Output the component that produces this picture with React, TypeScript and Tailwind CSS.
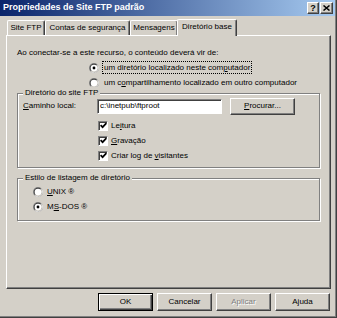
import React from 'react';

const raised =
  'border border-t-white border-l-white border-r-[#404040] border-b-[#404040] shadow-[inset_-1px_-1px_0_#808080]';
const sunken =
  'border border-t-[#808080] border-l-[#808080] border-r-white border-b-white shadow-[inset_1px_1px_0_#404040]';
const etched = 'border border-[#808080] shadow-[inset_1px_1px_0_#fff,1px_1px_0_#fff]';

function Radio({ checked }: { checked?: boolean }) {
  return (
    <svg width="10" height="10" viewBox="0 0 12 12" className="shrink-0">
      <circle cx="6" cy="6" r="6" fill="#808080" />
      <path d="M10.24 1.76A6 6 0 0 1 1.76 10.24Z" fill="#fff" />
      <circle cx="6" cy="6" r="5" fill="#404040" />
      <path d="M9.54 2.46A5 5 0 0 1 2.46 9.54Z" fill="#d4d0c8" />
      <circle cx="6" cy="6" r="4" fill="#fff" />
      {checked && <circle cx="6" cy="6" r="1.7" fill="#000" />}
    </svg>
  );
}

function Check() {
  return (
    <span className={`flex h-[10px] w-[10px] shrink-0 items-center justify-center bg-white ${sunken}`}>
      <svg width="7" height="7" viewBox="0 0 7 7">
        <path d="M0.6 3.2 L2.6 5.2 L6.4 1.2" stroke="#000" strokeWidth="1.7" fill="none" />
      </svg>
    </span>
  );
}

function Tab({ label, w }: { label: string; w: string }) {
  return (
    <div
      className={`${w} flex h-[15px] items-center justify-center rounded-t-[2px] border-l border-t border-r border-l-white border-t-white border-r-[#404040] shadow-[inset_-1px_0_0_#808080]`}
    >
      {label}
    </div>
  );
}

export default function App() {
  return (
    <div className="flex h-[318px] w-[337px] flex-col bg-[#d4d0c8] font-['Liberation_Sans',Arial,sans-serif] text-[8px] text-black shadow-[inset_-1px_-1px_0_#404040,inset_-2px_-2px_0_#808080]">
      {/* title bar */}
      <div className="mr-[2px] flex h-[16px] shrink-0 items-center bg-[linear-gradient(to_right,#0a246a,#a6caf0)] pl-[3px] pr-[2px]">
        <span className="text-[9px] font-bold text-white">Propriedades de Site FTP padrão</span>
        <div className="ml-auto flex gap-[1px]">
          <div className={`flex h-[12px] w-[12px] items-center justify-center bg-[#d4d0c8] text-[9px] font-bold leading-none ${raised}`}>
            ?
          </div>
          <div className={`flex h-[12px] w-[13px] items-center justify-center bg-[#d4d0c8] ${raised}`}>
            <svg width="7" height="6" viewBox="0 0 7 6">
              <path d="M0.5 0.5 L6.5 5.5 M6.5 0.5 L0.5 5.5" stroke="#000" strokeWidth="1.5" />
            </svg>
          </div>
        </div>
      </div>

      {/* tabs */}
      <div className="flex h-[19px] shrink-0 items-end pl-[7px]">
        <Tab label="Site FTP" w="w-[38px]" />
        <Tab label="Contas de segurança" w="w-[85px]" />
        <Tab label="Mensagens" w="w-[48px]" />
        <div className="relative z-10 -mb-[1px] -ml-[1px] flex h-[17px] w-[60px] items-start justify-center rounded-t-[2px] border-l border-t border-r border-l-white border-t-white border-r-[#404040] bg-[#d4d0c8] pt-[1px] shadow-[inset_-1px_0_0_#808080]">
          Diretório base
        </div>
      </div>

      {/* panel */}
      <div className="ml-[6px] flex h-[254px] w-[325px] shrink-0 flex-col border border-t-white border-l-white border-r-[#404040] border-b-[#404040] pt-[10px] shadow-[inset_-1px_-1px_0_#808080]">
        <div className="h-[14px] pl-[10px] leading-[14px]">
          Ao conectar-se a este recurso, o conteúdo deverá vir de:
        </div>
        <div className="flex h-[15px] items-center gap-[4px] pl-[82px]">
          <Radio checked />
          <span className="px-[1px] leading-[11px] outline outline-1 outline-dotted outline-black">
            um diretório localizado neste com<span className="underline">p</span>utador
          </span>
        </div>
        <div className="flex h-[15px] items-center gap-[4px] pl-[82px]">
          <Radio />
          <span className="px-[1px]">
            um c<span className="underline">o</span>mpartilhamento localizado em outro computador
          </span>
        </div>

        {/* group 1 */}
        <div className={`ml-[10px] mt-[3px] flex h-[75px] w-[303px] flex-col ${etched}`}>
          <div className="-mt-[7px] ml-[5px] h-[12px] w-fit bg-[#d4d0c8] px-[2px] leading-[12px]">
            Diretório do site FTP
          </div>
          <div className="-mt-[2px] flex h-[18px] items-center pl-[5px]">
            <span className="w-[74px] shrink-0">
              <span className="underline">C</span>aminho local:
            </span>
            <div className={`flex h-[15px] w-[125px] items-center bg-white pl-[2px] ${sunken}`}>
              c:\inetpub\ftproot
            </div>
            <div className={`ml-[8px] flex h-[17px] w-[65px] items-center justify-center ${raised}`}>
              <span className="underline">P</span>rocurar...
            </div>
          </div>
          <div className="mt-[3px] flex h-[15px] items-center gap-[3px] pl-[80px]">
            <Check />
            <span>
              Le<span className="underline">i</span>tura
            </span>
          </div>
          <div className="flex h-[15px] items-center gap-[3px] pl-[80px]">
            <Check />
            <span>
              <span className="underline">G</span>ravação
            </span>
          </div>
          <div className="flex h-[15px] items-center gap-[3px] pl-[80px]">
            <Check />
            <span>
              Criar log de <span className="underline">v</span>isitantes
            </span>
          </div>
        </div>

        {/* group 2 */}
        <div className={`ml-[10px] mt-[10px] flex h-[43px] w-[303px] flex-col ${etched}`}>
          <div className="-mt-[7px] ml-[5px] h-[12px] w-fit bg-[#d4d0c8] px-[2px] leading-[12px]">
            Estilo de listagem de diretório
          </div>
          <div className="flex h-[15px] items-center gap-[4px] pl-[15px]">
            <Radio />
            <span>
              <span className="underline">U</span>NIX ®
            </span>
          </div>
          <div className="flex h-[15px] items-center gap-[4px] pl-[15px]">
            <Radio checked />
            <span>
              M<span className="underline">S</span>-DOS ®
            </span>
          </div>
        </div>
      </div>

      {/* buttons */}
      <div className="mt-[4px] flex justify-end gap-[4px] pr-[7px]">
        <div className="flex h-[18px] w-[55px] items-center justify-center border border-black shadow-[inset_1px_1px_0_#fff,inset_-1px_-1px_0_#404040,inset_-2px_-2px_0_#808080]">
          OK
        </div>
        <div className={`flex h-[18px] w-[55px] items-center justify-center ${raised}`}>Cancelar</div>
        <div className={`flex h-[18px] w-[55px] items-center justify-center text-[#808080] [text-shadow:1px_1px_0_#fff] ${raised}`}>
          Aplicar
        </div>
        <div className={`flex h-[18px] w-[55px] items-center justify-center ${raised}`}>Ajuda</div>
      </div>
    </div>
  );
}
